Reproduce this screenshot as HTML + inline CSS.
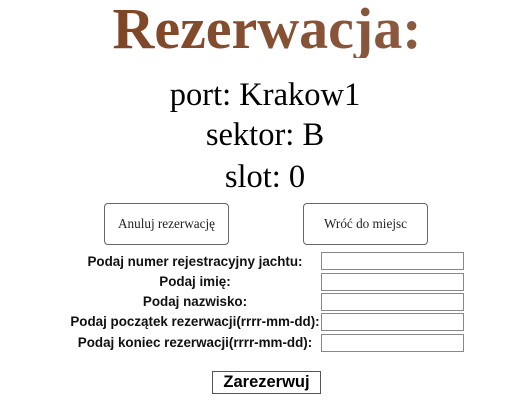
<!DOCTYPE html>
<html><head><meta charset="utf-8"><style>
body{margin:0;width:512px;height:406px;background:#fff;position:relative;overflow:hidden}
.t{position:absolute;left:0;width:512px;text-align:center;font-family:"Liberation Serif",serif;padding-left:18px;box-sizing:border-box}
h1{position:absolute;left:0;width:512px;margin:0;text-align:center;font:bold 58px/58px "Liberation Serif",serif;color:#84502f;background:linear-gradient(90deg,#7a3e1c,#8e6048);-webkit-background-clip:text;background-clip:text;-webkit-text-fill-color:transparent;top:0px;padding-left:22px;box-sizing:border-box}
.p{font-size:32.5px;line-height:34px;color:#000}
.b{position:absolute;top:203px;height:42px;width:125px;border:1px solid #666;border-radius:4px;box-sizing:border-box;font:13.2px/40px "Liberation Serif",serif;text-align:center;color:#222}
.l{position:absolute;left:55px;width:280px;text-align:center;font:bold 13.4px/17px "Liberation Sans",sans-serif;color:#111}
.i{position:absolute;left:321px;width:143px;height:18px;box-sizing:border-box;border:1px solid #888}
.z{position:absolute;left:212px;top:371px;width:109px;height:23px;box-sizing:border-box;border:1px solid #555;font:bold 16.5px/21px "Liberation Sans",sans-serif;text-align:center;color:#000}
</style></head><body>
<h1>Rezerwacja:</h1>
<div class="t p" style="top:78px">port: Krakow1</div>
<div class="t p" style="top:118px">sektor: B</div>
<div class="t p" style="top:160px">slot: 0</div>
<div class="b" style="left:104px">Anuluj rezerwację</div>
<div class="b" style="left:303px">Wróć do miejsc</div>
<div class="l" style="top:253px">Podaj numer rejestracyjny jachtu:</div>
<div class="l" style="top:273px">Podaj imię:</div>
<div class="l" style="top:293px">Podaj nazwisko:</div>
<div class="l" style="top:313px">Podaj początek rezerwacji(rrrr-mm-dd):</div>
<div class="l" style="top:334px">Podaj koniec rezerwacji(rrrr-mm-dd):</div>
<div class="i" style="top:252px"></div>
<div class="i" style="top:273px"></div>
<div class="i" style="top:293px"></div>
<div class="i" style="top:313px"></div>
<div class="i" style="top:334px"></div>
<div class="z">Zarezerwuj</div>
</body></html>
